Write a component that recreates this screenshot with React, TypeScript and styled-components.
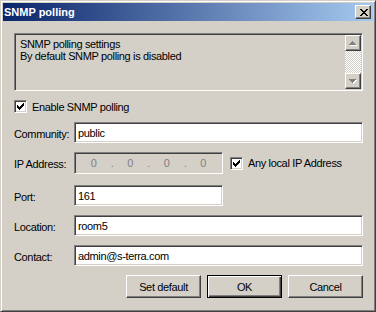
import React from "react";
import styled, { createGlobalStyle, css } from "styled-components";

const GlobalStyle = createGlobalStyle`
  html, body { margin: 0; padding: 0; background: #d4d0c8; }
  body { font-family: "Liberation Sans", Arial, sans-serif; font-size: 11px; }
  * { box-sizing: border-box; }
`;

const sunken = css`
  border: 1px solid;
  border-color: #808080 #ffffff #ffffff #808080;
  box-shadow: inset 1px 1px #404040, inset -1px -1px #d4d0c8;
`;

const raised = css`
  border: 1px solid;
  border-color: #ffffff #404040 #404040 #ffffff;
  box-shadow: inset -1px -1px #808080;
`;

const Window = styled.div`
  width: 376px;
  height: 312px;
  display: flex;
  flex-direction: column;
  background: #d4d0c8;
  border: 1px solid;
  border-color: #d4d0c8 #404040 #404040 #d4d0c8;
  box-shadow: inset 1px 1px #ffffff, inset -1px -1px #808080;
  padding: 2px;
  color: #000;
  letter-spacing: -0.35px;
`;

const TitleBar = styled.div`
  height: 18px;
  flex: none;
  display: flex;
  align-items: center;
  padding: 0 2px 0 1px;
  background: linear-gradient(to right, #0a246a, #a6caf0);
`;

const TitleText = styled.div`
  flex: 1;
  color: #fff;
  font-weight: bold;
  font-size: 11px;
  letter-spacing: 0;
  line-height: 13px;
`;

const CloseButton = styled.div`
  width: 16px;
  height: 14px;
  ${raised};
  background: #d4d0c8;
  display: flex;
  align-items: center;
  justify-content: center;
  padding-left: 1px;
`;

const Client = styled.div`
  flex: 1;
  display: flex;
  flex-direction: column;
  padding: 12px 10px 11px 11px;
`;

const DescBox = styled.div`
  height: 58px;
  ${sunken};
  display: flex;
  padding: 1px;
  background: #d4d0c8;
`;

const DescText = styled.div`
  flex: 1;
  padding: 3px 4px;
  line-height: 12px;
`;

const ScrollBar = styled.div`
  width: 16px;
  display: flex;
  flex-direction: column;
`;

const ScrollButton = styled.div`
  width: 16px;
  height: 16px;
  ${raised};
  background: #d4d0c8;
  display: flex;
  align-items: center;
  justify-content: center;
`;

const ScrollTrack = styled.div`
  flex: 1;
  background: repeating-conic-gradient(#ffffff 0 25%, #d4d0c8 0 50%) 0 0 / 2px 2px;
`;

const CheckRow = styled.label<{ $mt?: number; $ml?: number }>`
  display: flex;
  align-items: center;
  gap: 5px;
  height: 13px;
  margin-top: ${(p) => p.$mt ?? 0}px;
  margin-left: ${(p) => p.$ml ?? 0}px;
  white-space: nowrap;
`;

const CheckBox = styled.span`
  width: 13px;
  height: 13px;
  flex: none;
  ${sunken};
  background: #fff;
  display: flex;
  align-items: center;
  justify-content: center;
`;

const FieldRow = styled.div<{ $mt: number; $h?: number }>`
  display: flex;
  align-items: center;
  margin-top: ${(p) => p.$mt}px;
  height: ${(p) => p.$h ?? 21}px;
`;

const Label = styled.span`
  width: 60px;
  flex: none;
  padding-top: 2px;
  white-space: nowrap;
`;

const TextInput = styled.input<{ $w: number }>`
  width: ${(p) => p.$w}px;
  height: 100%;
  ${sunken};
  background: #fff;
  padding: 0 3px;
  margin: 0;
  font: inherit;
  letter-spacing: inherit;
  line-height: 13px;
  color: #000;
  outline: none;
`;

const IpBox = styled.div`
  width: 149px;
  height: 100%;
  ${sunken};
  background: #d4d0c8;
  padding: 2px;
  display: flex;
  align-items: center;
  color: #808080;
`;

const IpField = styled.span`
  flex: 1;
  text-align: center;
  line-height: 13px;
`;

const IpDot = styled.span`
  width: 3px;
  text-align: center;
  line-height: 13px;
`;

const ButtonRow = styled.div`
  margin-top: 9px;
  display: flex;
  justify-content: flex-end;
  gap: 6px;
`;

const Button = styled.div<{ $default?: boolean }>`
  width: 75px;
  height: 23px;
  display: flex;
  align-items: center;
  justify-content: center;
  background: #d4d0c8;
  ${(p) =>
    p.$default
      ? css`
          border: 1px solid #000;
          box-shadow: inset 1px 1px #ffffff, inset -1px -1px #404040, inset -2px -2px #808080;
        `
      : raised};
`;

const Pixels: React.FC<{ rows: string[]; color: string; shadow?: string }> = ({ rows, color, shadow }) => {
  const w = rows[0].length + (shadow ? 1 : 0);
  const h = rows.length + (shadow ? 1 : 0);
  const rects: React.ReactNode[] = [];
  const draw = (dx: number, dy: number, c: string, key: string) =>
    rows.forEach((r, y) =>
      r.split("").forEach((ch, x) => {
        if (ch === "#") rects.push(<rect key={`${key}${x}-${y}`} x={x + dx} y={y + dy} width={1} height={1} fill={c} />);
      })
    );
  if (shadow) draw(1, 1, shadow, "s");
  draw(0, 0, color, "c");
  return (
    <svg width={w} height={h} viewBox={`0 0 ${w} ${h}`} shapeRendering="crispEdges" style={{ display: "block" }}>
      {rects}
    </svg>
  );
};

const CLOSE = ["##....##", ".##..##.", "..####..", "...##...", "..####..", ".##..##.", "##....##"];
const CHECK = ["......#", ".....##", "#...###", "##.###.", "#####..", ".###...", "..#...."];
const UP = ["...#...", "..###..", ".#####.", "#######"];
const DOWN = ["#######", ".#####.", "..###..", "...#..."];

const Check = () => <Pixels rows={CHECK} color="#000" />;

export default function App() {
  return (
    <>
      <GlobalStyle />
      <Window>
        <TitleBar>
          <TitleText>SNMP polling</TitleText>
          <CloseButton>
            <Pixels rows={CLOSE} color="#000" />
          </CloseButton>
        </TitleBar>
        <Client>
          <DescBox>
            <DescText>
              SNMP polling settings
              <br />
              By default SNMP polling is disabled
            </DescText>
            <ScrollBar>
              <ScrollButton>
                <Pixels rows={UP} color="#808080" shadow="#ffffff" />
              </ScrollButton>
              <ScrollTrack />
              <ScrollButton>
                <Pixels rows={DOWN} color="#808080" shadow="#ffffff" />
              </ScrollButton>
            </ScrollBar>
          </DescBox>

          <CheckRow $mt={9}>
            <CheckBox>
              <Check />
            </CheckBox>
            Enable SNMP polling
          </CheckRow>

          <FieldRow $mt={9}>
            <Label>Community:</Label>
            <TextInput $w={289} defaultValue="public" />
          </FieldRow>

          <FieldRow $mt={9} $h={22}>
            <Label>IP Address:</Label>
            <IpBox>
              <IpField>0</IpField>
              <IpDot>.</IpDot>
              <IpField>0</IpField>
              <IpDot>.</IpDot>
              <IpField>0</IpField>
              <IpDot>.</IpDot>
              <IpField>0</IpField>
            </IpBox>
            <CheckRow $ml={7}>
              <CheckBox>
                <Check />
              </CheckBox>
              Any local IP Address
            </CheckRow>
          </FieldRow>

          <FieldRow $mt={11}>
            <Label>Port:</Label>
            <TextInput $w={149} defaultValue="161" />
          </FieldRow>

          <FieldRow $mt={9}>
            <Label>Location:</Label>
            <TextInput $w={289} defaultValue="room5" />
          </FieldRow>

          <FieldRow $mt={9}>
            <Label>Contact:</Label>
            <TextInput $w={289} defaultValue="admin@s-terra.com" />
          </FieldRow>

          <ButtonRow>
            <Button>Set default</Button>
            <Button $default>OK</Button>
            <Button>Cancel</Button>
          </ButtonRow>
        </Client>
      </Window>
    </>
  );
}
